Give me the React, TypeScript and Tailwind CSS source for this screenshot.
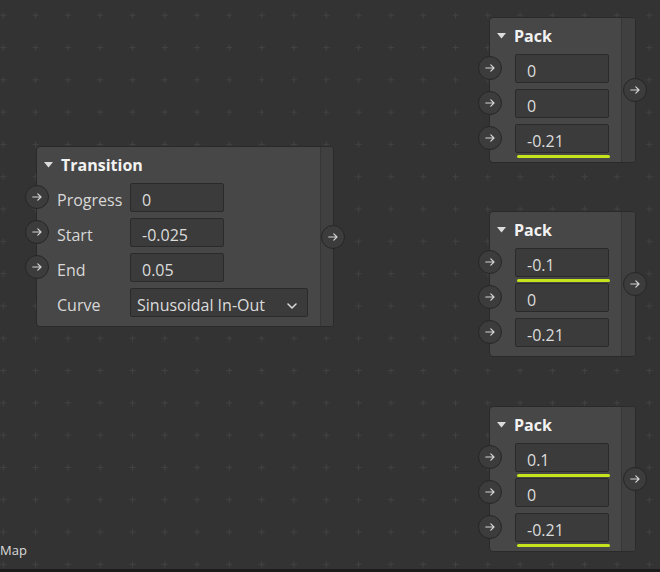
import React from "react";

const FONT = { fontFamily: '"Open Sans", "Noto Sans", sans-serif' };

function Arrow() {
  return (
    <svg width="10" height="8" viewBox="0 0 10 8" fill="none">
      <path d="M0.8 4 H9 M5.8 0.9 L9 4 L5.8 7.1" stroke="#d4d4d4" strokeWidth="1.2" strokeLinecap="round" strokeLinejoin="round" />
    </svg>
  );
}

function Port({ className }: { className: string }) {
  return (
    <div className={"absolute z-10 w-[24px] h-[24px] rounded-full bg-[#3c3c3c] border border-[#262626] flex items-center justify-center " + className}>
      <Arrow />
    </div>
  );
}

function Underline() {
  return <div className="absolute left-[1px] right-[-2px] top-[30px] h-[3px] rounded-full bg-[#c6e41c]" />;
}

function ValueBox({ value, width, underline }: { value: string; width: string; underline?: boolean }) {
  return (
    <div className={"relative h-[29px] rounded-[2px] border border-[#2a2a2a] bg-[#3b3b3b] pl-[11px] pt-[5px] text-[16px] leading-[22px] text-[#dcdcdc] " + width}>
      {value}
      {underline ? <Underline /> : null}
    </div>
  );
}

function Title({ text }: { text: string }) {
  return (
    <div className="flex items-center h-[22px] mt-[7px] mb-[7px] pl-[7px]">
      <svg width="9" height="6" viewBox="0 0 9 6" className="mr-[8px]">
        <path d="M0 0 H9 L4.5 5.5 Z" fill="#dcdcdc" />
      </svg>
      <span className="text-[16px] font-bold leading-[22px] text-[#f2f2f2]">{text}</span>
    </div>
  );
}

function TransitionNode() {
  const rows = [
    { label: "Progress", value: "0" },
    { label: "Start", value: "-0.025" },
    { label: "End", value: "0.05" },
  ];
  return (
    <div className="absolute left-[36px] top-[146px] w-[298px] flex rounded-[4px] border border-[#2a2a2a] bg-[#474747]">
      <div className="flex-1 pb-[9px]">
        <Title text="Transition" />
        <div className="flex flex-col gap-[6px]">
          {rows.map((r) => (
            <div key={r.label} className="relative flex h-[29px]">
              <Port className="left-[-12px] top-[2px]" />
              <div className="w-[93px] pl-[20px] pt-[6px] text-[16px] leading-[22px] text-[#d8d8d8]">{r.label}</div>
              <ValueBox value={r.value} width="w-[94px]" />
            </div>
          ))}
          <div className="relative flex h-[29px]">
            <div className="w-[93px] pl-[20px] pt-[6px] text-[16px] leading-[22px] text-[#d8d8d8]">Curve</div>
            <div className="flex items-start justify-between h-[29px] w-[178px] rounded-[2px] border border-[#2a2a2a] bg-[#3b3b3b] pl-[6px] pr-[10px] pt-[5px] text-[16px] leading-[22px] text-[#dcdcdc]">
              <span>Sinusoidal In-Out</span>
              <svg width="10" height="6" viewBox="0 0 10 6" fill="none" className="mt-[9px]">
                <path d="M1 1 L5 5 L9 1" stroke="#dcdcdc" strokeWidth="1.5" strokeLinecap="round" strokeLinejoin="round" />
              </svg>
            </div>
          </div>
        </div>
      </div>
      <div className="w-[13px] rounded-r-[3px] border-l border-[#363636] bg-[#404040]" />
      <Port className="right-[-12px] top-1/2 -translate-y-1/2" />
    </div>
  );
}

function PackNode({ top, values, lines }: { top: string; values: string[]; lines: boolean[] }) {
  return (
    <div className={"absolute left-[489px] w-[147px] flex rounded-[4px] border border-[#2a2a2a] bg-[#474747] " + top}>
      <div className="flex-1 pb-[9px]">
        <Title text="Pack" />
        <div className="flex flex-col gap-[6px]">
          {values.map((v, i) => (
            <div key={i} className="relative flex h-[29px] pl-[25px]">
              <Port className="left-[-12px] top-[2px]" />
              <ValueBox value={v} width="w-[94px]" underline={lines[i]} />
            </div>
          ))}
        </div>
      </div>
      <div className="w-[14px] rounded-r-[3px] border-l border-[#363636] bg-[#404040]" />
      <Port className="right-[-12px] top-1/2 -translate-y-1/2" />
    </div>
  );
}

export default function App() {
  return (
    <div className="relative w-[660px] h-[572px] overflow-hidden bg-[#333333]" style={FONT}>
      <svg className="absolute inset-0" width="660" height="572">
        <defs>
          <pattern id="grid" x="-0.2" y="11.8" width="32.3" height="32.3" patternUnits="userSpaceOnUse">
            <path d="M3.5 0.5 V6.5 M0.5 3.5 H6.5" stroke="#424242" strokeWidth="1" />
          </pattern>
        </defs>
        <rect width="660" height="572" fill="url(#grid)" />
      </svg>

      <TransitionNode />
      <PackNode top="top-[17px]" values={["0", "0", "-0.21"]} lines={[false, false, true]} />
      <PackNode top="top-[211px]" values={["-0.1", "0", "-0.21"]} lines={[true, false, false]} />
      <PackNode top="top-[406px]" values={["0.1", "0", "-0.21"]} lines={[true, false, true]} />

      <div className="absolute left-0 top-[541px] text-[13px] leading-[18px] text-[#dcdcdc]">Map</div>
      <div className="absolute left-0 bottom-0 w-full h-[3px] bg-[#1c1c1c]" />
    </div>
  );
}
